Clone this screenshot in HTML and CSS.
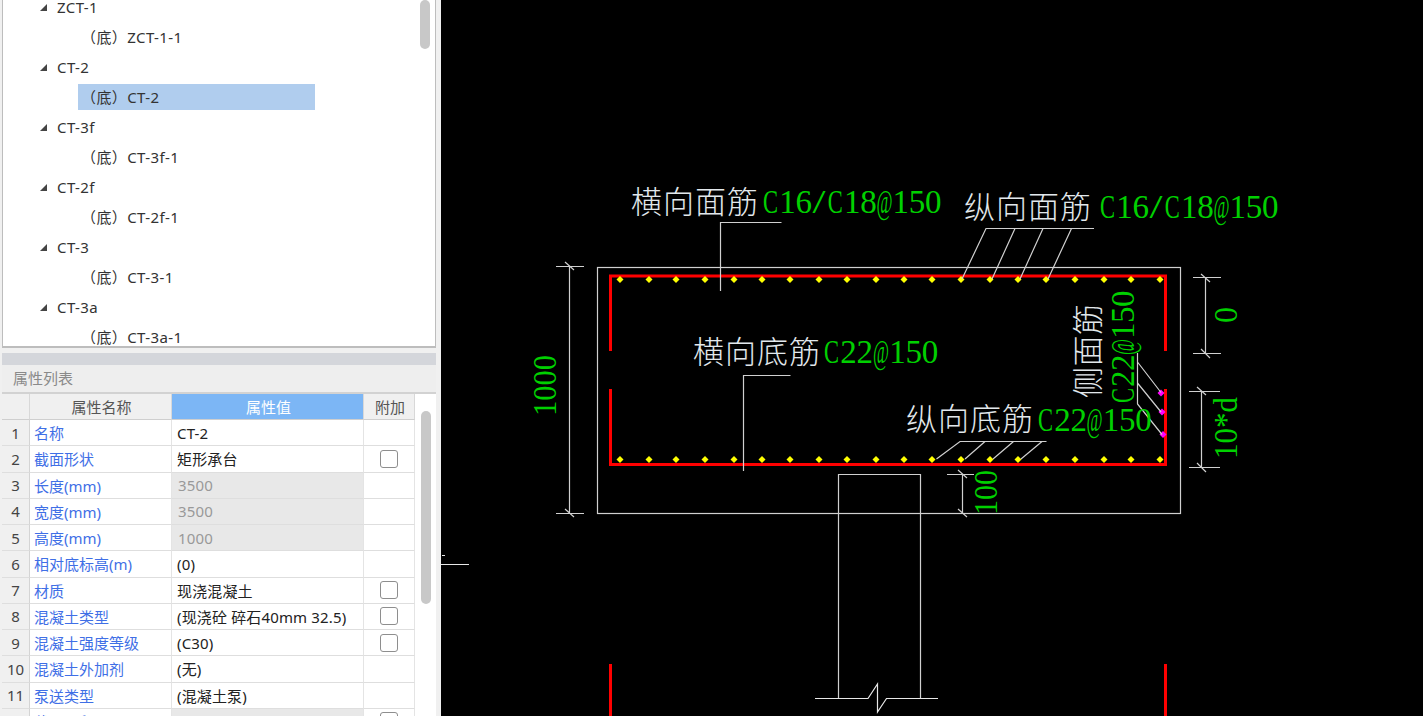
FILE: index.html
```html
<!DOCTYPE html>
<html lang="en">
<head>
    <meta charset="UTF-8">
    <title>属性列表</title>
    <link rel="stylesheet" href="styles.css">
</head>
<body>
    <div class="side">
        <div class="tree">
            <div class="tree-list">
                <div class="node"><i class="arrow"></i>ZCT-1</div>
                <div class="leaf"><span>（底）ZCT-1-1</span></div>
                <div class="node"><i class="arrow"></i>CT-2</div>
                <div class="leaf"><span class="selected">（底）CT-2</span></div>
                <div class="node"><i class="arrow"></i>CT-3f</div>
                <div class="leaf"><span>（底）CT-3f-1</span></div>
                <div class="node"><i class="arrow"></i>CT-2f</div>
                <div class="leaf"><span>（底）CT-2f-1</span></div>
                <div class="node"><i class="arrow"></i>CT-3</div>
                <div class="leaf"><span>（底）CT-3-1</span></div>
                <div class="node"><i class="arrow"></i>CT-3a</div>
                <div class="leaf"><span>（底）CT-3a-1</span></div>
            </div>
            <div class="tree-scroll"><div class="thumb tree-thumb"></div></div>
        </div>
        <div class="strip"></div>
        <div class="prop-title">属性列表</div>
        <div class="props">
            <div class="prop-grid">
                <div class="head"></div><div class="head">属性名称</div><div class="head active">属性值</div><div class="head">附加</div>

                <div class="num">1</div><div class="name">名称</div><div class="val">CT-2</div><div class="extra"></div>
                <div class="num">2</div><div class="name">截面形状</div><div class="val">矩形承台</div><div class="extra"><i class="check"></i></div>
                <div class="num">3</div><div class="name">长度(mm)</div><div class="val off">3500</div><div class="extra"></div>
                <div class="num">4</div><div class="name">宽度(mm)</div><div class="val off">3500</div><div class="extra"></div>
                <div class="num">5</div><div class="name">高度(mm)</div><div class="val off">1000</div><div class="extra"></div>
                <div class="num">6</div><div class="name">相对底标高(m)</div><div class="val">(0)</div><div class="extra"></div>
                <div class="num">7</div><div class="name">材质</div><div class="val">现浇混凝土</div><div class="extra"><i class="check"></i></div>
                <div class="num">8</div><div class="name">混凝土类型</div><div class="val">(现浇砼 碎石40mm 32.5)</div><div class="extra"><i class="check"></i></div>
                <div class="num">9</div><div class="name">混凝土强度等级</div><div class="val">(C30)</div><div class="extra"><i class="check"></i></div>
                <div class="num">10</div><div class="name">混凝土外加剂</div><div class="val">(无)</div><div class="extra"></div>
                <div class="num">11</div><div class="name">泵送类型</div><div class="val">(混凝土泵)</div><div class="extra"></div>
                <div class="num">12</div><div class="name">截面面积</div><div class="val off"></div><div class="extra"><i class="check"></i></div>
            </div>
            <div class="prop-scroll"><div class="thumb prop-thumb"></div></div>
        </div>
    </div>

    <div class="cad">
        <svg class="cad-svg" viewBox="441 0 982 716" width="982" height="716">
            <defs>
                <path id="dot" d="M0 -3.5L3.5 0L0 3.5L-3.5 0Z"/>
                <g id="dots">
                    <use href="#dot" x="620"/><use href="#dot" x="649"/><use href="#dot" x="676"/><use href="#dot" x="705"/>
                    <use href="#dot" x="734"/><use href="#dot" x="762"/><use href="#dot" x="790"/><use href="#dot" x="819"/>
                    <use href="#dot" x="847"/><use href="#dot" x="876"/><use href="#dot" x="904"/><use href="#dot" x="932"/>
                    <use href="#dot" x="961"/><use href="#dot" x="990"/><use href="#dot" x="1018"/><use href="#dot" x="1046"/>
                    <use href="#dot" x="1075"/><use href="#dot" x="1104"/><use href="#dot" x="1131"/><use href="#dot" x="1160"/>
                </g>
            </defs>

            <!-- outline and column -->
            <rect class="line" x="597.5" y="267.5" width="583" height="246"/>
            <path class="line" d="M838.5 698V474.5H920.5V698"/>
            <path class="line bright" d="M815 698.5H868L877.5 684V712L886.5 698.5H938"/>
            <path class="line bright" d="M441 564.5H469M442 555.5H445"/>

            <!-- rebar -->
            <path class="rebar" d="M610.5 351V276H1165.5V351"/>
            <path class="rebar" d="M610.5 389V464.5H1165.5V389"/>
            <path class="rebar" d="M610.5 664V716M1165.5 664V716"/>
            <g class="yellow"><use href="#dots" y="279.5"/><use href="#dots" y="459.5"/></g>
            <g class="magenta">
                <use href="#dot" x="1161" y="393"/><use href="#dot" x="1162" y="412"/><use href="#dot" x="1163" y="434.5"/>
            </g>

            <!-- leaders -->
            <path class="line" d="M781.5 222.5H720.5V291"/>
            <path class="line" d="M790.5 375.5H743.5V471"/>
            <path class="line" d="M1094 228.5H986L962 279M1015 228.5L992 279M1043 228.5L1020 279M1071.5 228.5L1048 279"/>
            <path class="line" d="M1046.5 441.5H960L936.5 459M985 441.5L965 459M1013.5 441.5L993 459M1042 441.5L1021 459"/>
            <path class="line" d="M1137.5 353V404L1162 434.5M1137.5 362L1161 392.5M1137.5 383L1161 412"/>

            <!-- dimensions -->
            <path class="line" d="M569.5 266V513M556 266.5H584M556 513.5H584M565 262L574 270M565 509L574 517"/>
            <path class="line" d="M1205.5 277V353M1193 277.5H1221M1193 353.5H1221M1201 274L1210 282M1201 349L1210 358"/>
            <path class="line" d="M1201.5 391V467M1189 391.5H1220M1189 467.5H1220M1197 387L1206 395M1197 463L1206 472"/>
            <path class="line" d="M962.5 474V513M947 474.5H974M958 470L967 478M958 509L967 517"/>

            <!-- labels -->
            <text class="label" x="631" y="213" textLength="127">横向面筋</text>
            <text class="label" x="964" y="218" textLength="127">纵向面筋</text>
            <text class="label" x="693" y="363" textLength="127">横向底筋</text>
            <text class="label" x="906" y="430" textLength="127">纵向底筋</text>
            <text class="label" transform="translate(1099 398) rotate(-90)" textLength="94">侧面筋</text>

            <!-- CAD font has an even advance, C / and @ are fitted into it -->
            <text class="spec" x="763 779.2 795.4 812.6 827.8 844 860.2 876.4 892.6 908.8 925" y="213"><tspan textLength="15" lengthAdjust="spacingAndGlyphs">C</tspan>16<tspan textLength="13" lengthAdjust="spacingAndGlyphs">/</tspan><tspan textLength="15" lengthAdjust="spacingAndGlyphs">C</tspan>18<tspan textLength="16" lengthAdjust="spacingAndGlyphs">@</tspan>150</text>
            <text class="spec" x="1100 1116.2 1132.4 1149.6 1164.8 1181 1197.2 1213.4 1229.6 1245.8 1262" y="218"><tspan textLength="15" lengthAdjust="spacingAndGlyphs">C</tspan>16<tspan textLength="13" lengthAdjust="spacingAndGlyphs">/</tspan><tspan textLength="15" lengthAdjust="spacingAndGlyphs">C</tspan>18<tspan textLength="16" lengthAdjust="spacingAndGlyphs">@</tspan>150</text>
            <text class="spec" x="824 840.3 856.6 872.9 889.2 905.5 921.8" y="363"><tspan textLength="15" lengthAdjust="spacingAndGlyphs">C</tspan>22<tspan textLength="16" lengthAdjust="spacingAndGlyphs">@</tspan>150</text>
            <text class="spec" x="1038 1054.2 1070.4 1086.6 1102.8 1119 1135.2" y="431"><tspan textLength="15" lengthAdjust="spacingAndGlyphs">C</tspan>22<tspan textLength="16" lengthAdjust="spacingAndGlyphs">@</tspan>150</text>
            <text class="spec" x="0 16 32 48 64 80 96" transform="translate(1134 403) rotate(-90)"><tspan textLength="15" lengthAdjust="spacingAndGlyphs">C</tspan>22<tspan textLength="16" lengthAdjust="spacingAndGlyphs">@</tspan>150</text>
            <text class="spec" transform="translate(556 416) rotate(-90)" textLength="61" lengthAdjust="spacingAndGlyphs">1000</text>
            <text class="spec" transform="translate(1237 323) rotate(-90)" textLength="16" lengthAdjust="spacingAndGlyphs">0</text>
            <text class="spec" transform="translate(1237 459) rotate(-90)" textLength="62" lengthAdjust="spacingAndGlyphs">10*d</text>
            <text class="spec" transform="translate(997 515) rotate(-90)" textLength="45" lengthAdjust="spacingAndGlyphs">100</text>
        </svg>
    </div>
</body>
</html>
```

FILE: styles.css
```css
* {
    margin: 0;
    padding: 0;
    box-sizing: border-box;
}
html, body {
    height: 100%;
    overflow: hidden;
}
body {
    display: flex;
    background: #000;
    font-family: "Noto Sans", "Noto Sans CJK SC", sans-serif;
    font-size: 15px;
    color: #333;
}

/* left panel */
.side {
    width: 441px;
    height: 716px;
    flex: none;
    padding: 0 5px 0 2px;
    background: #f0f0f0;
    overflow: hidden;
}
.tree {
    display: flex;
    height: 348px;
    background: #fff;
    border: 1px solid #bdbdbd;
    border-top: none;
    border-bottom-width: 2px;
    overflow: hidden;
}
.tree-list {
    flex: 1;
    margin-top: -8px;
    letter-spacing: 0.4px;
}
.node, .leaf {
    height: 30px;
    line-height: 30px;
    white-space: nowrap;
}
.node {
    padding-left: 37px;
}
.arrow {
    display: inline-block;
    width: 0;
    height: 0;
    margin-right: 10px;
    border-style: solid;
    border-width: 0 0 7px 7px;
    border-color: transparent transparent #444 transparent;
    vertical-align: 2px;
}
.leaf {
    padding: 2px 0 2px 75px;
}
.leaf span {
    display: block;
    width: 237px;
    height: 26px;
    line-height: 26px;
    padding-left: 3px;
}
.leaf .selected {
    background: #b0cdee;
}
.tree-scroll {
    width: 15px;
    flex: none;
    padding-right: 4px;
}
.thumb {
    width: 10px;
    background: #c8c8c8;
    border-radius: 5px;
}
.tree-thumb {
    height: 49px;
}
.strip {
    height: 12px;
    margin-top: 5px;
    background: #d4d6db;
}
.prop-title {
    height: 29px;
    padding-left: 11px;
    line-height: 27px;
    color: #8a8a8a;
    background: #eee;
    border-bottom: 2px solid #d2d2d2;
}

/* property grid */
.props {
    display: flex;
    height: 322px;
    background: #fff;
}
.prop-grid {
    display: grid;
    grid-template-columns: 28px 142px 192px 51px;
    grid-template-rows: 26px;
    grid-auto-rows: 26.25px;
    flex: none;
}
.prop-grid > div {
    display: flex;
    align-items: center;
    border-bottom: 1px solid #dedede;
    border-right: 1px solid #e4e4e4;
    white-space: nowrap;
    overflow: hidden;
}
.prop-grid > .head {
    justify-content: center;
    padding-left: 2px;
    background: #f0f0f0;
    color: #555;
    border-bottom: 1px solid #cfcfcf;
    border-right: 1px solid #d8d8d8;
}
.prop-grid > .active {
    background: #7cb6f5;
    color: #fff;
}
.prop-grid > .num {
    justify-content: center;
    background: #f0f0f0;
    color: #444;
    border-right: 1px solid #d4d4d4;
}
.name {
    padding-left: 4px;
    color: #3f6fe6;
}
.val {
    padding-left: 5px;
    letter-spacing: 0.15px;
    color: #222;
}
.prop-grid > .off {
    padding-left: 6px;
    background: #e8e8e8;
    color: #999;
}
.prop-grid > .extra {
    justify-content: center;
}
.check {
    display: block;
    width: 18px;
    height: 18px;
    background: #fff;
    border: 1px solid #8e8e8e;
    border-radius: 3px;
}
.prop-scroll {
    flex: 1;
    padding-left: 6px;
}
.prop-thumb {
    height: 193px;
    margin-top: 17px;
}

/* drawing */
.cad {
    flex: 1;
    height: 716px;
    background: #000;
}
.cad-svg {
    display: block;
}
.line {
    fill: none;
    stroke: #d0d0d0;
    stroke-width: 1.2;
}
.bright {
    stroke: #e8e8e8;
}
.rebar {
    fill: none;
    stroke: #f00;
    stroke-width: 3;
}
.yellow {
    fill: #ff0;
}
.magenta {
    fill: #f0f;
}
.label {
    font-family: "Noto Sans CJK SC", sans-serif;
    font-size: 31px;
    font-weight: 300;
    fill: #e2e8ec;
}
.spec {
    font-family: "Liberation Serif", serif;
    font-size: 33px;
    fill: #00d000;
}
```
